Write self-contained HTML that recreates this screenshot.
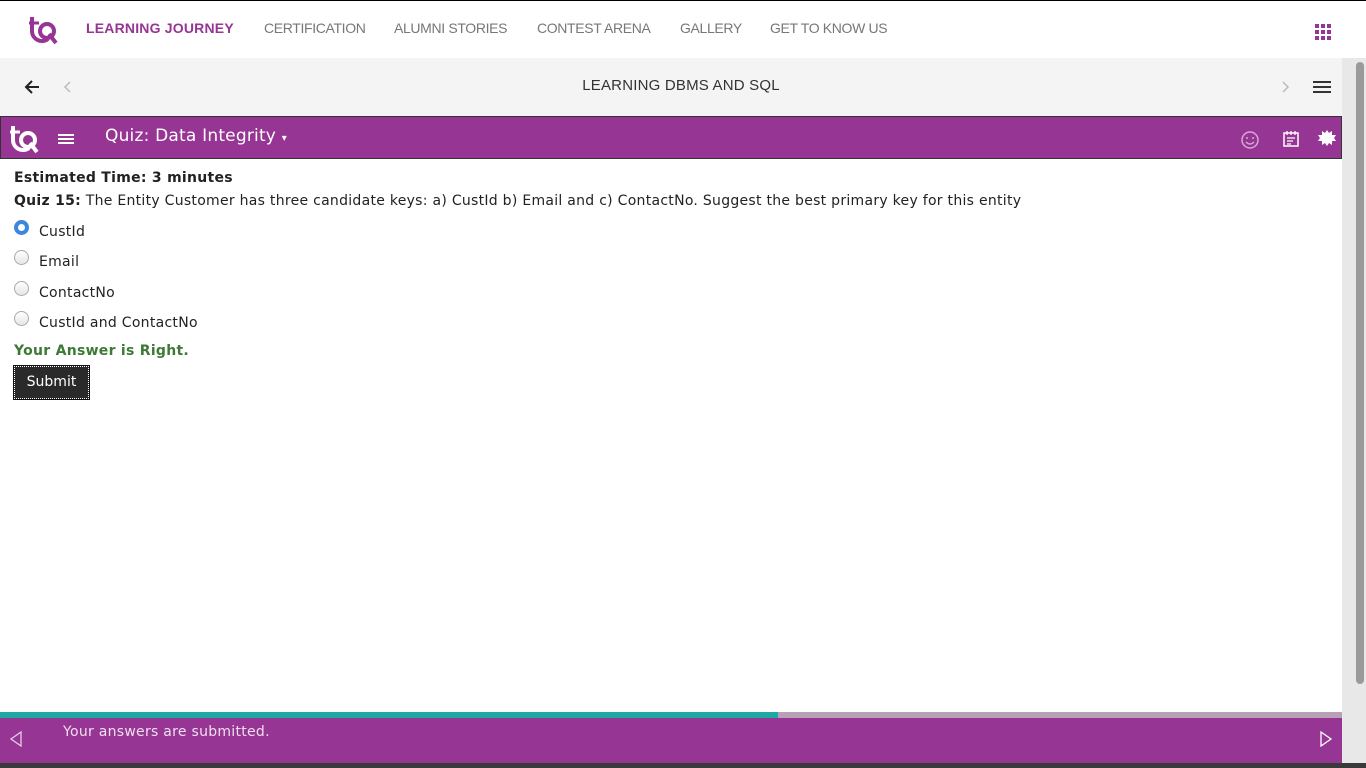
<!DOCTYPE html>
<html><head><meta charset="utf-8"><style>
*{margin:0;padding:0;box-sizing:border-box}
body{width:1366px;height:768px;overflow:hidden;background:#fff;position:relative;font-family:"DejaVu Sans",sans-serif}
.abs{position:absolute}
.nav{top:0;left:0;width:1366px;height:58px;border-top:1px solid #000;background:#fff}
.nav span{position:absolute;top:19px;font-family:"Liberation Sans",sans-serif;font-size:14px;color:#777;letter-spacing:-0.35px;white-space:nowrap}
.bar2{top:58px;left:0;width:1342px;height:58px;background:#f4f4f4}
.scroll{top:58px;left:1342px;width:24px;height:710px;background:#e8e8e8}
.thumb{top:62px;left:1356px;width:8px;height:622px;background:#9a9a9a;border-radius:4px}
.qbar{top:116px;left:0;width:1342px;height:43px;background:#963593;border:1px solid #333}
.c{font-size:14px;color:#222;letter-spacing:0.28px;white-space:nowrap}
.radio{width:15px;height:15px;border-radius:50%;border:1px solid #aaa;background:linear-gradient(#fff,#e6e6e6);left:14px}
</style></head><body>
<div class="abs nav">
<svg class="abs" style="left:28px;top:14px" width="30" height="30" viewBox="0 0 30 30"><path d="M4 2v14a10 10 0 0 0 16 8" stroke="#963593" stroke-width="4" fill="none"/><path d="M1 8h10" stroke="#963593" stroke-width="3"/><circle cx="19" cy="16" r="7" stroke="#963593" stroke-width="4" fill="none"/><path d="M21 19l7 9" stroke="#963593" stroke-width="4"/></svg>
<span style="left:86px;color:#963593;font-weight:bold;letter-spacing:0.2px">LEARNING JOURNEY</span>
<span style="left:264px">CERTIFICATION</span>
<span style="left:394px">ALUMNI STORIES</span>
<span style="left:537px">CONTEST ARENA</span>
<span style="left:680px">GALLERY</span>
<span style="left:770px">GET TO KNOW US</span>
<svg class="abs" style="left:1315px;top:23px" width="16" height="16"><g fill="#963593"><rect x="0" y="0" width="4" height="4"/><rect x="6" y="0" width="4" height="4"/><rect x="12" y="0" width="4" height="4"/><rect x="0" y="6" width="4" height="4"/><rect x="6" y="6" width="4" height="4"/><rect x="12" y="6" width="4" height="4"/><rect x="0" y="12" width="4" height="4"/><rect x="6" y="12" width="4" height="4"/><rect x="12" y="12" width="4" height="4"/></g></svg>
</div>
<div class="abs bar2">
<svg class="abs" style="left:24px;top:21px" width="16" height="16"><path d="M15 8H2M8 2L2 8l6 6" stroke="#222" stroke-width="2" fill="none"/></svg>
<svg class="abs" style="left:63px;top:23px" width="10" height="12"><path d="M7 1L2 6l5 5" stroke="#bbb" stroke-width="1.5" fill="none"/></svg>
<div class="abs" style="left:0;width:1362px;top:19px;text-align:center;font-family:'Liberation Sans',sans-serif;font-size:15px;color:#333;letter-spacing:0.2px">LEARNING DBMS AND SQL</div>
<svg class="abs" style="left:1281px;top:23px" width="10" height="12"><path d="M2 1l5 5-5 5" stroke="#bbb" stroke-width="1.5" fill="none"/></svg>
<svg class="abs" style="left:1313px;top:22px" width="18" height="14"><path d="M0 2h18M0 7h18M0 12h18" stroke="#333" stroke-width="2"/></svg>
</div>
<div class="abs scroll"></div><div class="abs thumb"></div>
<div class="abs qbar">
<svg class="abs" style="left:8px;top:7px" width="30" height="30" viewBox="0 0 30 30"><path d="M4 2v14a10 10 0 0 0 16 8" stroke="#fff" stroke-width="4" fill="none"/><path d="M1 8h10" stroke="#fff" stroke-width="3"/><circle cx="19" cy="16" r="7" stroke="#fff" stroke-width="4" fill="none"/><path d="M21 19l7 9" stroke="#fff" stroke-width="4"/></svg>
<svg class="abs" style="left:57px;top:16px" width="16" height="12"><path d="M0 2h16M0 6h16M0 10h16" stroke="#fff" stroke-width="2"/></svg>
<div class="abs" style="left:104px;top:9px;color:#fff;font-size:17px;letter-spacing:0.2px">Quiz: Data Integrity <span style="font-size:10px">▾</span></div>
<svg class="abs" style="left:1240px;top:14px" width="18" height="18"><circle cx="9" cy="9" r="8" stroke="#d9a8d6" stroke-width="1.5" fill="none"/><circle cx="6" cy="7" r="1" fill="#d9a8d6"/><circle cx="12" cy="7" r="1" fill="#d9a8d6"/><path d="M5 11q4 4 8 0" stroke="#d9a8d6" stroke-width="1.3" fill="none"/></svg>
<svg class="abs" style="left:1282px;top:13px" width="16" height="18"><rect x="1" y="3" width="14" height="13" stroke="#fff" stroke-width="1.5" fill="none"/><path d="M4 1v4M8 1v4M12 1v4M4 8h8M4 11h6M4 14h4" stroke="#fff" stroke-width="1.3"/></svg>
<svg class="abs" style="left:1317px;top:13px" width="18" height="18" viewBox="0 0 18 18"><path d="M9 0l2 3 3-2 0 4 4 0-2 3 2 3-4 0 0 4-3-2-2 3-2-3-3 2 0-4-4 0 2-3-2-3 4 0 0-4 3 2z" fill="#fff"/></svg>
</div>
<div class="abs c" style="left:14px;top:170px;font-weight:bold">Estimated Time: 3 minutes</div>
<div class="abs c" style="left:14px;top:193px"><b>Quiz 15:</b> The Entity Customer has three candidate keys: a) CustId b) Email and c) ContactNo. Suggest the best primary key for this entity</div>
<div class="abs radio" style="top:220px;background:#fff;border:4px solid #3b87de"></div>
<div class="abs c" style="left:39px;top:224px">CustId</div>
<div class="abs radio" style="top:250px"></div><div class="abs c" style="left:39px;top:254px">Email</div>
<div class="abs radio" style="top:281px"></div><div class="abs c" style="left:39px;top:285px">ContactNo</div>
<div class="abs radio" style="top:311px"></div><div class="abs c" style="left:39px;top:315px">CustId and ContactNo</div>
<div class="abs c" style="left:14px;top:343px;font-weight:bold;color:#3c7a35">Your Answer is Right.</div>
<div class="abs" style="left:14px;top:366px;width:75px;height:33px;background:#2a2a2a;border:1px dotted #fff;outline:1px solid #111;color:#fff;font-size:14px;line-height:31px;text-align:center">Submit</div>
<div class="abs" style="top:712px;left:0;width:778px;height:6px;background:#1fa9a3"></div>
<div class="abs" style="top:712px;left:778px;width:564px;height:6px;background:#b8a0b6"></div>
<div class="abs" style="top:718px;left:0;width:1342px;height:45px;background:#963593"></div>
<div class="abs" style="top:763px;left:0;width:1366px;height:5px;background:#3a3a3a"></div>
<svg class="abs" style="left:9px;top:731px" width="14" height="16"><path d="M12 1L2 8l10 7z" stroke="#e8cbe6" stroke-width="1.3" fill="none"/></svg>
<div class="abs c" style="left:63px;top:724px;color:#f0e0ef">Your answers are submitted.</div>
<svg class="abs" style="left:1319px;top:731px" width="14" height="16"><path d="M2 1l10 7-10 7z" stroke="#fff" stroke-width="1.3" fill="none"/></svg>
</body></html>
